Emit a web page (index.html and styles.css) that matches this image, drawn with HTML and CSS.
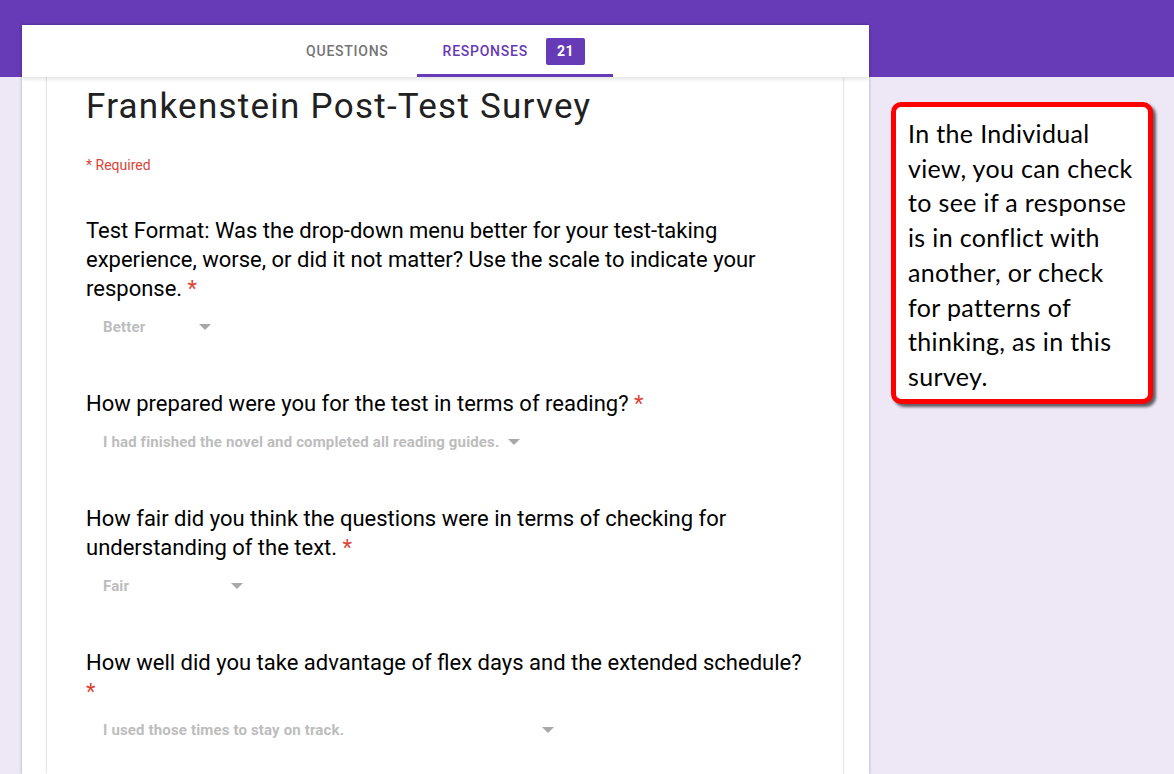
FILE: index.html
```html
<!DOCTYPE html>
<html>
<head>
<meta charset="utf-8">
<title>Frankenstein Post-Test Survey</title>
<link rel="stylesheet" href="styles.css">
</head>
<body>
<div class="page">
  <main class="panel">
    <nav class="tabs">
      <div class="tab">QUESTIONS</div>
      <div class="tab tab-active">RESPONSES <span class="badge">21</span></div>
    </nav>
    <section class="card">
      <h1 class="title">Frankenstein Post-Test Survey</h1>
      <div class="required">* Required</div>

      <div class="q">
        <div class="q-title">Test Format: Was the drop-down menu better for your test-taking experience, worse, or did it not matter? Use the scale to indicate your response. <span class="star">*</span></div>
        <div class="dd dd-better"><span>Better</span><i class="arrow"></i></div>
      </div>

      <div class="q">
        <div class="q-title">How prepared were you for the test in terms of reading? <span class="star">*</span></div>
        <div class="dd dd-finished"><span>I had finished the novel and completed all reading guides.</span><i class="arrow"></i></div>
      </div>

      <div class="q">
        <div class="q-title">How fair did you think the questions were in terms of checking for understanding of the text. <span class="star">*</span></div>
        <div class="dd dd-fair"><span>Fair</span><i class="arrow"></i></div>
      </div>

      <div class="q">
        <div class="q-title">How well did you take advantage of flex days and the extended schedule? <span class="star">*</span></div>
        <div class="dd dd-track"><span>I used those times to stay on track.</span><i class="arrow"></i></div>
      </div>
    </section>
  </main>
  <aside class="side">
    <div class="callout">In the Individual<br>view, you can check<br>to see if a response<br>is in conflict with<br>another, or check<br>for patterns of<br>thinking, as in this<br>survey.</div>
  </aside>
</div>
</body>
</html>
```
FILE: styles.css
```css
* { box-sizing: border-box; }
html, body { margin: 0; padding: 0; }
body {
  font-family: Roboto, "Liberation Sans", sans-serif;
  background: #ede7f6;
  overflow: hidden;
}
.page {
  display: flex;
  align-items: flex-start;
  height: 774px;
  background: linear-gradient(#673ab7 0, #673ab7 77px, #ede7f6 77px);
}
.panel {
  margin-top: 25px;
  margin-left: 22px;
  width: 847px;
  height: 749px;
  background: #fff;
  box-shadow: 0 0 3px rgba(0,0,0,0.28);
  display: flex;
  flex-direction: column;
  overflow: hidden;
}
.tabs {
  height: 52px;
  flex: none;
  display: flex;
  justify-content: center;
  background: #fff;
  position: relative;
  z-index: 2;
  box-shadow: 0 2px 4px rgba(0,0,0,0.12);
}
.tab {
  display: flex;
  align-items: center;
  padding: 0 28px 0 28px;
  font-size: 14px;
  font-weight: 500;
  color: #757575;
  letter-spacing: 0.75px;
}
.tab-active {
  color: #673ab7;
  border-bottom: 3px solid #673ab7;
  padding: 3px 28px 0 26px;
}
.badge {
  display: inline-flex;
  align-items: center;
  justify-content: center;
  width: 39px;
  height: 27px;
  margin-left: 18px;
  background: #673ab7;
  color: #fff;
  border-radius: 2px;
  font-weight: 700;
  font-size: 14px;
  letter-spacing: 0.3px;
}
.card {
  flex: 1;
  margin: 0 26px 0 25px;
  background: #fff;
  box-shadow: 0 0 2px rgba(0,0,0,0.3);
  padding: 10px 38px 0 39px;
  position: relative;
  z-index: 1;
}
.title {
  margin: 0;
  font-size: 35px;
  font-weight: 400;
  line-height: 40px;
  letter-spacing: 1.25px;
  color: #212121;
}
.required {
  margin-top: 28px;
  font-size: 14px;
  line-height: 20px;
  color: #db4437;
}
.q { margin-top: 41px; }
.q + .q { margin-top: 52px; }
.q-title {
  font-size: 22px;
  line-height: 29px;
  color: #000;
}
.star { color: #db4437; }
.dd {
  display: flex;
  align-items: center;
  justify-content: space-between;
  margin-top: 14px;
  margin-left: 17px;
  height: 20px;
  font-size: 15px;
  font-weight: 700;
  letter-spacing: 0.15px;
  color: #bdbdbd;
}
.dd-better { width: 108px; }
.dd-finished { width: 417px; }
.dd-fair { width: 140px; }
.dd-track { width: 451px; }
.arrow {
  width: 0;
  height: 0;
  border-left: 6px solid transparent;
  border-right: 6px solid transparent;
  border-top: 6px solid #a8a8a8;
}
.side {
  margin-left: 22px;
  margin-top: 102px;
}
.callout {
  width: 262px;
  height: 302px;
  border: 5px solid #ff0000;
  border-radius: 10px;
  background: #fff;
  box-shadow: 3px 3px 3px rgba(0,0,0,0.6);
  padding: 9px 0 0 12px;
  font-family: Lato, "Open Sans", sans-serif;
  font-size: 25px;
  line-height: 34.7px;
  letter-spacing: 0.35px;
  color: #000;
  white-space: nowrap;
}
```
